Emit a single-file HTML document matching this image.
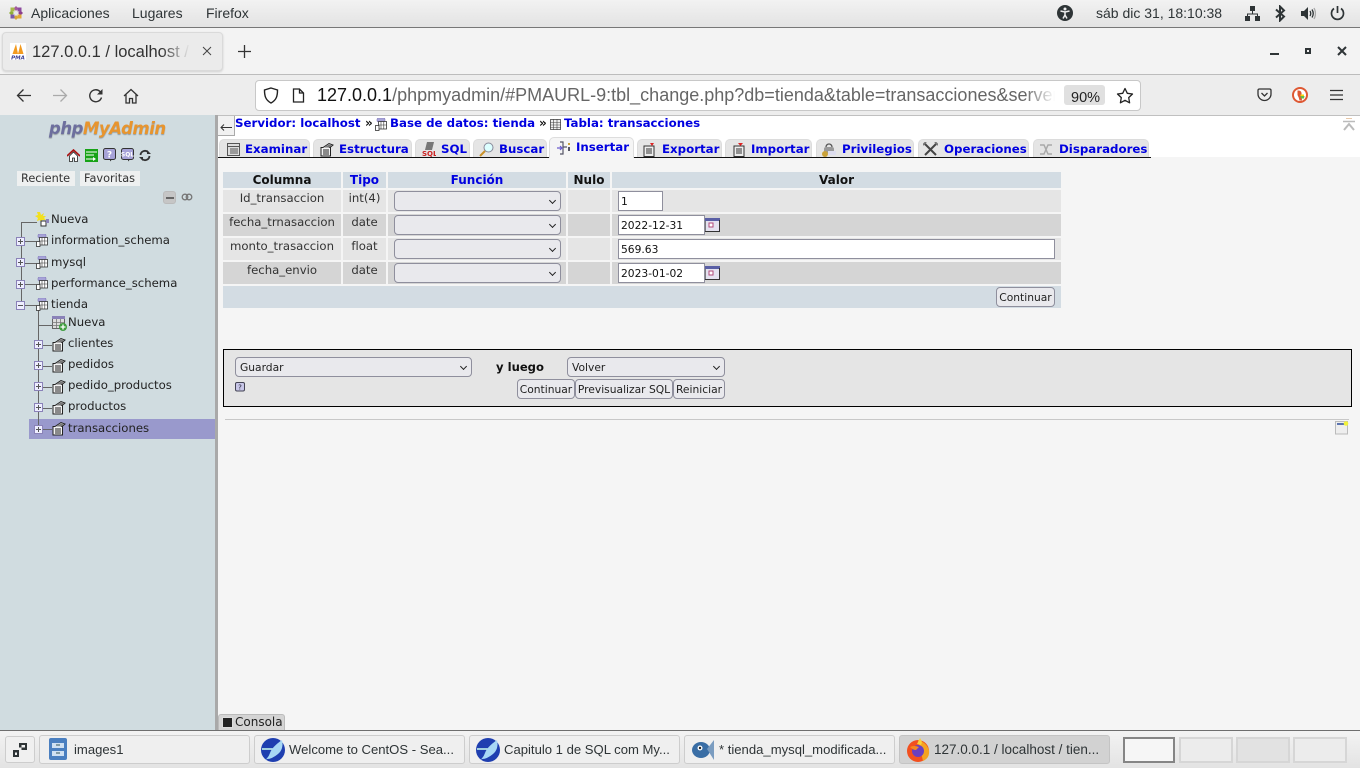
<!DOCTYPE html>
<html lang="es"><head><meta charset="utf-8"><title>phpMyAdmin</title>
<style>
html,body{margin:0;padding:0;width:1360px;height:768px;overflow:hidden;background:#f5f5f5}
body{position:relative;font-family:"DejaVu Sans",sans-serif;font-size:11.7px;color:#111}
.a,.t,svg{position:absolute}
.t{white-space:nowrap;line-height:16px}
.u{font-family:"Liberation Sans",sans-serif;font-size:14px;color:#2e3436}
.k{font-size:13.1px}
.b{font-weight:bold;color:#0000e0;font-size:11.8px}
.d{font-size:11.7px;color:#222}
.sel{position:absolute;box-sizing:border-box;background:#e9e9ed;border:1px solid #8f8f9d;border-radius:4px;height:20px;font-size:10.7px;line-height:20px;padding-left:4px;color:#222}
.sel:after{content:"";position:absolute;right:5px;top:6px;width:4px;height:4px;border-right:1.4px solid #222;border-bottom:1.4px solid #222;transform:rotate(45deg)}
.inp{position:absolute;box-sizing:border-box;background:#fff;border:1px solid #8f8f9d;height:20px;font-size:10.7px;line-height:20px;padding-left:2px;color:#111}
.btn{position:absolute;box-sizing:border-box;background:#e9e9ed;border:1px solid #8f8f9d;border-radius:4px;height:20px;font-size:10.7px;line-height:20px;text-align:center;color:#222}
.tab{position:absolute;box-sizing:border-box;top:139px;height:18px;background:#e5e5e5;border:1px solid #dcdcdc;border-bottom:0;border-radius:5px 5px 0 0}
.task{position:absolute;box-sizing:border-box;top:735px;height:29px;width:211px;background:#efefef;border:1px solid #cdcdcd;border-radius:3px}
.ws{position:absolute;box-sizing:border-box;top:737px;height:26px;background:#ececec;border:2px solid #d6d6d6}
.h{position:absolute;background:#666;height:1px}
.v{position:absolute;background:#666;width:1px}
.x{position:absolute;box-sizing:border-box;width:9px;height:9px;background:#eef;border:1px solid #8a82b8}
.x:before{content:"";position:absolute;left:1px;top:3px;width:5px;height:1px;background:#555}
.x.p:after{content:"";position:absolute;left:3px;top:1px;width:1px;height:5px;background:#555}
.hc{position:absolute;top:172px;height:16px;background:#d3dce3;text-align:center;font-weight:bold;font-size:12px;line-height:16px}
</style></head><body>

<!-- top GNOME bar -->
<div class="a" style="left:0;top:0;width:1360px;height:27px;background:linear-gradient(#f2f2f2,#e3e3e3)"></div>
<div class="a" style="left:0;top:27px;width:1360px;height:1px;background:#777"></div>
<svg style="left:9px;top:6px" width="14" height="14" viewBox="0 0 14 14"><path d="M7 0l2.500 2.500L7 5 4.500 2.500z" fill="#a35a9e"/><path d="M14 7l-2.500 2.500L9 7l2.500-2.500z" fill="#8c3f8c"/><path d="M7 14l-2.500-2.500L7 9l2.500 2.500z" fill="#d8a83a"/><path d="M0 7l2.500-2.500L5 7 2.500 9.500z" fill="#8fae3a"/><rect x="1.500" y="1.500" width="4" height="4" fill="#a8b84a"/><rect x="8.500" y="1.500" width="4" height="4" fill="#8c4a9e"/><rect x="1.500" y="8.500" width="4" height="4" fill="#7a5aa8"/><rect x="8.500" y="8.500" width="4" height="4" fill="#e0a838"/><path d="M7 4.500L9.500 7 7 9.500 4.500 7z" fill="#e8e8e8"/></svg>
<div class="t u" style="left:31px;top:5px">Aplicaciones</div>
<div class="t u" style="left:132px;top:5px">Lugares</div>
<div class="t u" style="left:206px;top:5px">Firefox</div>
<svg style="left:1057px;top:5px" width="16" height="16" viewBox="0 0 16 16"><circle cx="8" cy="8" r="8" fill="#2e3436"/><circle cx="8" cy="4" r="1.500" fill="#eee"/><path d="M3.500 6L8 7l4.500-1M8 7v3l-2 3.500M8 10l2 3.500" stroke="#eee" stroke-width="1.500" fill="none"/></svg>
<div class="t u" style="left:1096px;top:5px">sáb dic 31, 18:10:38</div>
<svg style="left:1245px;top:6px" width="15" height="15" viewBox="0 0 15 15"><path d="M5 0h5v5H5zM0 10h5v5H0zM10 10h5v5h-5z" fill="#2e3436"/><path d="M7.500 5v3M2.500 10V8h10v2" stroke="#2e3436" fill="none"/></svg>
<svg style="left:1275px;top:5px" width="11" height="17" viewBox="0 0 11 17"><path d="M1 4.500l8 7-4 4V1.500l4 4-8 7" stroke="#2e3436" stroke-width="2" fill="none"/></svg>
<svg style="left:1301px;top:6px" width="15" height="15" viewBox="0 0 15 15"><path d="M0 5h3l4-4v13l-4-4H0z" fill="#2e3436"/><path d="M9 5q1.500 2.500 0 5M11 3.500q2.500 4 0 8" stroke="#2e3436" stroke-width="1.300" fill="none"/><path d="M13 2q3 5.500 0 11" stroke="#aaa" stroke-width="1.300" fill="none"/></svg>
<svg style="left:1330px;top:5px" width="15" height="16" viewBox="0 0 15 16"><path d="M4 3.500a6 6 0 1 0 7 0M7.500 1v7" stroke="#2e3436" stroke-width="1.700" fill="none"/></svg>

<!-- tab bar -->
<div class="a" style="left:0;top:28px;width:1360px;height:46px;background:#f3f3f3"></div>
<div class="a" style="left:0;top:74px;width:1360px;height:1px;background:#bcbcbc"></div>
<div class="a" style="left:2px;top:32px;width:221px;height:39px;box-sizing:border-box;background:#ebebeb;border:1px solid #dadada;border-radius:4px;box-shadow:0 1px 2px rgba(0,0,0,.15)"></div>
<svg style="left:10px;top:43px" width="16" height="17" viewBox="0 0 16 17"><rect width="16" height="17" fill="#fff"/><path d="M2.500 11L6 1l2 10zM8 11l2.500-10 3 10z" fill="#f29a1f"/><text x="8" y="16.500" font-size="5.500" font-weight="bold" font-style="italic" text-anchor="middle" fill="#3a3f95" font-family="DejaVu Sans">PMA</text></svg>
<div class="t" style="left:32px;top:43px;font-family:'Liberation Sans',sans-serif;font-size:16.5px;line-height:18px;width:158px;overflow:hidden;color:#333;-webkit-mask-image:linear-gradient(90deg,#000 82%,transparent)">127.0.0.1 / localhost / tienda</div>
<svg style="left:202px;top:46px" width="10" height="10" viewBox="0 0 10 10"><path d="M1 1l8 8M9 1l-8 8" stroke="#444" stroke-width="1"/></svg>
<svg style="left:238px;top:45px" width="13" height="13" viewBox="0 0 13 13"><path d="M6.500 0v13M0 6.500h13" stroke="#333" stroke-width="1.300"/></svg>
<div class="a" style="left:1270px;top:53px;width:9px;height:2px;background:#2e3436"></div>
<div class="a" style="left:1305px;top:48px;width:6px;height:6px;box-sizing:border-box;border:2px solid #2e3436"></div>
<svg style="left:1337px;top:46px" width="10" height="10" viewBox="0 0 10 10"><path d="M1 1l8 8M9 1l-8 8" stroke="#2e3436" stroke-width="2"/></svg>

<!-- nav bar -->
<div class="a" style="left:0;top:75px;width:1360px;height:40px;background:#ededed"></div>
<svg style="left:16px;top:88px" width="16" height="15" viewBox="0 0 16 15"><path d="M15 7.500H1.500M7.500 1.500l-6 6 6 6" stroke="#333" stroke-width="1.300" fill="none"/></svg>
<svg style="left:52px;top:88px" width="16" height="15" viewBox="0 0 16 15"><path d="M1 7.500h13.500M8.500 1.500l6 6-6 6" stroke="#aaa" stroke-width="1.300" fill="none"/></svg>
<svg style="left:88px;top:88px" width="16" height="16" viewBox="0 0 16 16"><path d="M13.500 9.500a6 6 0 1 1-1.500-6L14 5.500" stroke="#333" stroke-width="1.400" fill="none"/><path d="M14.500 1v5.500H9z" fill="#333"/></svg>
<svg style="left:123px;top:88px" width="16" height="16" viewBox="0 0 16 16"><path d="M1 8l7-6.500L15 8M3 6.500V15h3.500v-4.500h3V15H13V6.500" stroke="#333" stroke-width="1.300" fill="none"/></svg>
<div class="a" style="left:255px;top:80px;width:886px;height:31px;box-sizing:border-box;background:#fff;border:1px solid #c8c8c8;border-radius:4px"></div>
<svg style="left:263px;top:87px" width="16" height="17" viewBox="0 0 16 17"><path d="M8 1l6.500 2c0 6-1 10-6.500 13C2.500 13 1.500 9 1.500 3z" stroke="#222" stroke-width="1.400" fill="none"/></svg>
<svg style="left:292px;top:88px" width="13" height="15" viewBox="0 0 13 15"><path d="M1.500 1h6l4 4v9h-10zM7.500 1v4h4" stroke="#222" stroke-width="1.300" fill="none"/></svg>
<div class="t" style="left:317px;top:85px;font-family:'Liberation Sans',sans-serif;font-size:18px;line-height:20px;width:738px;overflow:hidden;color:#666;-webkit-mask-image:linear-gradient(90deg,#000 96%,transparent)"><span style="color:#111">127.0.0.1</span>/phpmyadmin/#PMAURL-9:tbl_change.php?db=tienda&amp;table=transacciones&amp;server=1</div>
<div class="a" style="left:1064px;top:85px;width:41px;height:20px;background:#e0e0e0;border-radius:3px"></div>
<div class="t" style="left:1071px;top:90px;font-family:'Liberation Sans',sans-serif;font-size:14.5px;color:#222">90%</div>
<svg style="left:1116px;top:87px" width="18" height="17" viewBox="0 0 18 17"><path d="M9 1.500l2.300 4.800 5.200.7-3.800 3.600.9 5.200L9 13.300l-4.600 2.500.9-5.200L1.500 7l5.200-.7z" stroke="#222" stroke-width="1.300" fill="none" stroke-linejoin="round"/></svg>
<svg style="left:1257px;top:88px" width="15" height="14" viewBox="0 0 15 14"><path d="M1 2.500q0-1.500 1.500-1.500h10q1.500 0 1.500 1.500V6a6.500 6.500 0 0 1-13 0z" stroke="#333" stroke-width="1.300" fill="none"/><path d="M4.500 5L7.500 8l3-3" stroke="#333" stroke-width="1.300" fill="none"/></svg>
<svg style="left:1292px;top:87px" width="16" height="16" viewBox="0 0 16 16"><circle cx="8" cy="8" r="8" fill="#de5833"/><circle cx="8" cy="8" r="6" fill="#fff"/><path d="M5.500 3.500q4.500-.5 4 4l.5 6H7.500q-.5-3-2-5.500z" fill="#de5833"/><path d="M8.500 9h4l-.5 2.500H9z" fill="#65bc46"/><path d="M8.500 7.500h3.500v1.500H8.500z" fill="#fdd20a"/></svg>
<svg style="left:1330px;top:89px" width="13" height="12" viewBox="0 0 13 12"><path d="M0 1.500h13M0 6h13M0 10.500h13" stroke="#333" stroke-width="1.200"/></svg>

<!-- sidebar -->
<div class="a" style="left:0;top:115px;width:215px;height:615px;background:#d0dce0"></div>
<div class="a" style="left:215px;top:115px;width:3px;height:615px;background:#a9a9a9"></div>
<div class="t" style="left:49px;top:119px;font-size:16.5px;line-height:20px;font-weight:bold;font-style:italic;letter-spacing:-.45px;text-shadow:0 1px 1px rgba(0,0,0,.3)"><span style="color:#6d6f9e">php</span><span style="color:#e8952e">MyAdmin</span></div>
<svg style="left:67px;top:149px" width="13" height="13" viewBox="0 0 13 13"><path d="M2.500 7v5.500h3V9h2v3.500h3V7L6.500 3z" fill="#fff" stroke="#222" stroke-width=".8"/><path d="M0 7L6.500 1 13 7" stroke="#a11" stroke-width="1.600" fill="none"/></svg>
<svg style="left:85px;top:149px" width="13" height="13" viewBox="0 0 13 13"><rect width="13" height="13" fill="#17a317"/><path d="M1 3h11M1 6h8M1 10h9" stroke="#fff" stroke-width="1" fill="none"/><path d="M8 8l3 2-3 2z" fill="#fff"/></svg>
<svg style="left:103px;top:148px" width="13" height="14" viewBox="0 0 13 14"><rect x=".5" y=".5" width="12" height="11" rx="2" fill="#a7a3d8" stroke="#333"/><text x="6.500" y="9.500" font-size="9" font-weight="bold" text-anchor="middle" fill="#fff" font-family="DejaVu Sans">?</text><path d="M7 11.500v2l2-2z" fill="#333"/></svg>
<svg style="left:121px;top:148px" width="13" height="14" viewBox="0 0 13 14"><rect x=".5" y=".5" width="12" height="11" rx="2" fill="#a7a3d8" stroke="#333"/><text x="6.500" y="8.500" font-size="6" font-weight="bold" text-anchor="middle" fill="#fff" font-family="DejaVu Sans">SQL</text><path d="M7 11.500v2l2-2z" fill="#333"/></svg>
<svg style="left:139px;top:149px" width="12" height="13" viewBox="0 0 12 13"><path d="M1.500 6a4.500 4.500 0 0 1 7.500-3M10.500 7a4.500 4.500 0 0 1-7.500 3" stroke="#333" stroke-width="1.800" fill="none"/><path d="M8 1v4h4zM4 12V8H0z" fill="#333"/></svg>
<div class="a" style="left:17px;top:171px;width:58px;height:15px;background:#eef0f0"></div>
<div class="t" style="left:21px;top:171px;font-size:11.3px;line-height:15px;color:#333">Reciente</div>
<div class="a" style="left:80px;top:171px;width:60px;height:15px;background:#eef0f0"></div>
<div class="t" style="left:84px;top:171px;font-size:11.3px;line-height:15px;color:#333">Favoritas</div>
<div class="a" style="left:163px;top:191px;width:13px;height:13px;background:#c6c6c6;border:1px solid #bbb;border-radius:3px;box-sizing:border-box"></div>
<div class="a" style="left:166px;top:197px;width:8px;height:2px;background:#666"></div>
<svg style="left:181px;top:193px" width="12" height="8" viewBox="0 0 12 8"><circle cx="4" cy="4" r="2.800" stroke="#777" stroke-width="1.300" fill="none"/><circle cx="8" cy="4" r="2.800" stroke="#777" stroke-width="1.300" fill="none"/></svg>

<!-- tree -->
<div class="a" style="left:29px;top:419px;width:186px;height:20px;background:#9999cc"></div>
<div class="v" style="left:21px;top:222px;height:83px"></div>
<div class="h" style="left:21px;top:222px;width:16px"></div>
<div class="h" style="left:24px;top:241px;width:12px"></div>
<div class="h" style="left:24px;top:263px;width:12px"></div>
<div class="h" style="left:24px;top:284px;width:12px"></div>
<div class="h" style="left:24px;top:305px;width:12px"></div>
<div class="v" style="left:38px;top:310px;height:119px"></div>
<div class="h" style="left:38px;top:325px;width:14px"></div>
<div class="h" style="left:42px;top:345px;width:10px"></div>
<div class="h" style="left:42px;top:366px;width:10px"></div>
<div class="h" style="left:42px;top:387px;width:10px"></div>
<div class="h" style="left:42px;top:408px;width:10px"></div>
<div class="h" style="left:42px;top:429px;width:10px"></div>
<div class="x p" style="left:16px;top:237px"></div>
<div class="x p" style="left:16px;top:258px"></div>
<div class="x p" style="left:16px;top:280px"></div>
<div class="x" style="left:16px;top:301px"></div>
<div class="x p" style="left:34px;top:340px"></div>
<div class="x p" style="left:34px;top:361px"></div>
<div class="x p" style="left:34px;top:382px"></div>
<div class="x p" style="left:34px;top:403px"></div>
<div class="x p" style="left:34px;top:425px"></div>

<svg width="0" height="0" style="left:0;top:0"><defs>
<g id="db"><rect x="2" y="0" width="8" height="4" rx="1.500" fill="#a7a3d8" stroke="#8078b8" stroke-width=".6"/><rect x="3.500" y="3.500" width="8" height="7.500" fill="#fff" stroke="#333" stroke-width=".8"/><path d="M3.500 7h8M6 3.500V11M8.800 3.500V11" stroke="#333" stroke-width=".6"/><rect x=".5" y="7.500" width="3.500" height="5" fill="#fff" stroke="#333" stroke-width=".8"/></g>
<g id="tb"><path d="M1 5.500h2L9 1.500l4 1.500-3 2.500h.5V14H1z" fill="#f2f2f2" stroke="#222" stroke-width="1"/><path d="M3 8h6M3 10h6M3 12h6" stroke="#222" stroke-width="1"/><path d="M4 5.500L9 2.500l3 1-3 2z" fill="#777"/></g>
<g id="cal"><rect x=".5" y=".5" width="14" height="13" fill="#e4e2f0" stroke="#555" stroke-width=".7"/><rect x="0" y="0" width="15" height="3" fill="#5a5fa5"/><rect x="4" y="5" width="4" height="4" fill="#fff" stroke="#b04a7a"/><path d="M0 13.500h15M14.500 2v12" stroke="#333"/></g>
</defs></svg>

<svg style="left:34px;top:212px" width="15" height="15" viewBox="0 0 15 15"><path d="M6 0l1 3 3-2-1 3 3 0-2 2 2 2-4 0-1 3-1-3-3 1 1-3-3-2 3-1-1-3z" fill="#f2e01f"/><rect x="7" y="9" width="5" height="5" fill="#fff" stroke="#333"/><rect x="12" y="7" width="3" height="4" fill="#8a82b8"/></svg>
<div class="t d" style="left:51px;top:211px">Nueva</div>
<svg style="left:36px;top:234px" width="12" height="13" viewBox="0 0 12 13"><use href="#db"/></svg>
<div class="t d" style="left:51px;top:232px">information_schema</div>
<svg style="left:36px;top:256px" width="12" height="13" viewBox="0 0 12 13"><use href="#db"/></svg>
<div class="t d" style="left:51px;top:254px">mysql</div>
<svg style="left:36px;top:277px" width="12" height="13" viewBox="0 0 12 13"><use href="#db"/></svg>
<div class="t d" style="left:51px;top:275px">performance_schema</div>
<svg style="left:36px;top:298px" width="12" height="13" viewBox="0 0 12 13"><use href="#db"/></svg>
<div class="t d" style="left:51px;top:296px">tienda</div>
<svg style="left:52px;top:316px" width="15" height="15" viewBox="0 0 15 15"><rect x=".5" y=".5" width="12" height="12" fill="#ddd" stroke="#666"/><rect x="0" y="0" width="13" height="3" fill="#8a82b8"/><path d="M4.500 3v9M8.500 3v9M0 6.500h12M0 9.500h12" stroke="#777" stroke-width=".8"/><circle cx="11" cy="11" r="4" fill="#3f9d3f"/><path d="M11 8.500v5M8.500 11h5" stroke="#fff" stroke-width="1.300"/></svg>
<div class="t d" style="left:68px;top:314px">Nueva</div>
<svg style="left:52px;top:337px" width="14" height="15" viewBox="0 0 14 15"><use href="#tb"/></svg>
<div class="t d" style="left:68px;top:335px">clientes</div>
<svg style="left:52px;top:358px" width="14" height="15" viewBox="0 0 14 15"><use href="#tb"/></svg>
<div class="t d" style="left:68px;top:356px">pedidos</div>
<svg style="left:52px;top:379px" width="14" height="15" viewBox="0 0 14 15"><use href="#tb"/></svg>
<div class="t d" style="left:68px;top:377px">pedido_productos</div>
<svg style="left:52px;top:400px" width="14" height="15" viewBox="0 0 14 15"><use href="#tb"/></svg>
<div class="t d" style="left:68px;top:398px">productos</div>
<svg style="left:52px;top:421px" width="14" height="15" viewBox="0 0 14 15"><use href="#tb"/></svg>
<div class="t d" style="left:68px;top:420px">transacciones</div>

<!-- content -->
<div class="a" style="left:218px;top:115px;width:1142px;height:1px;background:#c0c0c0"></div>
<div class="a" style="left:218px;top:116px;width:1142px;height:41px;background:#fff"></div>
<div class="a" style="left:218px;top:116px;width:17px;height:20px;box-sizing:border-box;background:#f1f1f1;border:1px solid #aaa;border-left:0;border-top:0"></div>
<svg style="left:220px;top:124px" width="12" height="7" viewBox="0 0 12 7"><path d="M12 3.500H1M4 .5l-3 3 3 3" stroke="#333" fill="none"/></svg>
<svg style="left:1343px;top:118px" width="12" height="13" viewBox="0 0 12 13"><path d="M3 .5h6" stroke="#e8c8a8"/><path d="M0 3.500h12" stroke="#bbb" stroke-width="1.500"/><path d="M1 12l5-6 5 6" stroke="#bbb" stroke-width="2" fill="none"/></svg>
<div class="t b" style="left:235px;top:115px">Servidor: localhost</div>
<div class="t" style="left:365px;top:115px;font-weight:bold;font-size:12px">»</div>
<svg style="left:375px;top:118px" width="12" height="13" viewBox="0 0 12 13"><use href="#db"/></svg>
<div class="t b" style="left:390px;top:115px">Base de datos: tienda</div>
<div class="t" style="left:539px;top:115px;font-weight:bold;font-size:12px">»</div>
<svg style="left:550px;top:119px" width="11" height="11" viewBox="0 0 11 11"><rect x=".5" y=".5" width="10" height="10" fill="#eee" stroke="#444" stroke-width=".8"/><path d="M0 3.500h11M0 6h11M0 8.500h11M3.500 0v11M7 0v11" stroke="#444" stroke-width=".6"/></svg>
<div class="t b" style="left:564px;top:115px">Tabla: transacciones</div>

<div class="tab" style="left:219px;width:91px"></div>
<div class="tab" style="left:313px;width:99px"></div>
<div class="tab" style="left:415px;width:55px"></div>
<div class="tab" style="left:473px;width:74px"></div>
<div class="tab" style="left:637px;width:85px"></div>
<div class="tab" style="left:725px;width:87px"></div>
<div class="tab" style="left:816px;width:98px"></div>
<div class="tab" style="left:918px;width:111px"></div>
<div class="tab" style="left:1033px;width:116px"></div>
<div class="a" style="left:218px;top:157px;width:933px;height:1px;background:#111"></div>
<div class="a" style="left:549px;top:137px;width:85px;height:21px;box-sizing:border-box;background:#f5f5f5;border:1px solid #ddd;border-bottom:0;border-radius:5px 5px 0 0"></div>

<svg style="left:227px;top:143px" width="13" height="13" viewBox="0 0 13 13"><rect x=".5" y=".5" width="12" height="12" fill="#ddd" stroke="#555"/><path d="M0 3.500h13M3 6h8M3 8h8M3 10h8" stroke="#555"/></svg>
<div class="t b" style="left:245px;top:141px">Examinar</div>
<svg style="left:320px;top:142px" width="14" height="15" viewBox="0 0 14 15"><use href="#tb"/></svg>
<div class="t b" style="left:339px;top:141px">Estructura</div>
<svg style="left:422px;top:142px" width="14" height="15" viewBox="0 0 14 15"><path d="M5 0h7l-2 8H3z" fill="#777"/><text x="0" y="14" font-size="7" font-weight="bold" fill="#c22" font-family="DejaVu Sans">SQL</text></svg>
<div class="t b" style="left:441px;top:141px">SQL</div>
<svg style="left:479px;top:142px" width="15" height="15" viewBox="0 0 15 15"><circle cx="9.500" cy="5.500" r="4.500" fill="#dff" stroke="#889" stroke-width="1"/><path d="M6 9l-5 5" stroke="#c9922a" stroke-width="2"/></svg>
<div class="t b" style="left:499px;top:141px">Buscar</div>
<svg style="left:557px;top:141px" width="14" height="14" viewBox="0 0 14 14"><path d="M3 1h3v12H3M6 6h4" stroke="#556" stroke-width="1.200" fill="none"/><path d="M0 7h5l-2-2M3 9l2-2" stroke="#6a5acd" stroke-width="1.200" fill="none"/><rect x="11" y="2" width="2" height="2" fill="#c9a23a"/><rect x="11" y="6" width="2" height="4" fill="#556"/></svg>
<div class="t b" style="left:576px;top:139px">Insertar</div>
<svg style="left:643px;top:143px" width="13" height="14" viewBox="0 0 13 14"><rect x="1" y="3" width="10" height="10.500" fill="#eee" stroke="#333"/><path d="M3 6h6M3 8h6M3 10h6" stroke="#333"/><path d="M7 0l4 0-2 3z" fill="#d22"/></svg>
<div class="t b" style="left:662px;top:141px">Exportar</div>
<svg style="left:733px;top:143px" width="13" height="14" viewBox="0 0 13 14"><rect x="1" y="3" width="10" height="10.500" fill="#eee" stroke="#333"/><path d="M3 6h6M3 8h6M3 10h6" stroke="#333"/><path d="M5 0h5L7.500 3z" fill="#d22"/></svg>
<div class="t b" style="left:751px;top:141px">Importar</div>
<svg style="left:822px;top:143px" width="14" height="14" viewBox="0 0 14 14"><path d="M4 4a3 3 0 0 1 6 0" stroke="#555" stroke-width="1.300" fill="none"/><rect x="2" y="4" width="10" height="6" rx="2" fill="#999"/><circle cx="3" cy="11" r="3" fill="#c9a23a"/><rect x="6" y="8" width="8" height="4" fill="#dde"/></svg>
<div class="t b" style="left:842px;top:141px">Privilegios</div>
<svg style="left:923px;top:142px" width="15" height="15" viewBox="0 0 15 15"><path d="M2 2l11 11M13 2L2 13" stroke="#444" stroke-width="2"/><path d="M0 3l3-3M12 0l3 3" stroke="#777" stroke-width="2"/></svg>
<div class="t b" style="left:944px;top:141px">Operaciones</div>
<svg style="left:1039px;top:144px" width="14" height="11" viewBox="0 0 14 11"><path d="M1 1h4l4 9h4M1 10h4l4-9h4" stroke="#aaa" stroke-width="1.500" fill="none"/></svg>
<div class="t b" style="left:1059px;top:141px">Disparadores</div>

<!-- table -->
<div class="hc" style="left:223px;width:118px">Columna</div>
<div class="hc" style="left:343px;width:43px;color:#0000e0">Tipo</div>
<div class="hc" style="left:388px;width:178px;color:#0000e0">Función</div>
<div class="hc" style="left:568px;width:42px">Nulo</div>
<div class="hc" style="left:612px;width:449px">Valor</div>

<div class="a" style="left:223px;top:190px;width:118px;height:22px;background:#e5e5e5"></div><div class="a" style="left:343px;top:190px;width:43px;height:22px;background:#e5e5e5"></div><div class="a" style="left:388px;top:190px;width:178px;height:22px;background:#e5e5e5"></div><div class="a" style="left:568px;top:190px;width:42px;height:22px;background:#e5e5e5"></div><div class="a" style="left:612px;top:190px;width:449px;height:22px;background:#e5e5e5"></div>
<div class="a" style="left:223px;top:214px;width:118px;height:22px;background:#d5d5d5"></div><div class="a" style="left:343px;top:214px;width:43px;height:22px;background:#d5d5d5"></div><div class="a" style="left:388px;top:214px;width:178px;height:22px;background:#d5d5d5"></div><div class="a" style="left:568px;top:214px;width:42px;height:22px;background:#d5d5d5"></div><div class="a" style="left:612px;top:214px;width:449px;height:22px;background:#d5d5d5"></div>
<div class="a" style="left:223px;top:238px;width:118px;height:22px;background:#e5e5e5"></div><div class="a" style="left:343px;top:238px;width:43px;height:22px;background:#e5e5e5"></div><div class="a" style="left:388px;top:238px;width:178px;height:22px;background:#e5e5e5"></div><div class="a" style="left:568px;top:238px;width:42px;height:22px;background:#e5e5e5"></div><div class="a" style="left:612px;top:238px;width:449px;height:22px;background:#e5e5e5"></div>
<div class="a" style="left:223px;top:262px;width:118px;height:22px;background:#d5d5d5"></div><div class="a" style="left:343px;top:262px;width:43px;height:22px;background:#d5d5d5"></div><div class="a" style="left:388px;top:262px;width:178px;height:22px;background:#d5d5d5"></div><div class="a" style="left:568px;top:262px;width:42px;height:22px;background:#d5d5d5"></div><div class="a" style="left:612px;top:262px;width:449px;height:22px;background:#d5d5d5"></div>
<div class="a" style="left:223px;top:286px;width:838px;height:22px;background:#d3dce3"></div>

<div class="t" style="left:223px;width:118px;top:190px;text-align:center;color:#333">Id_transaccion</div>
<div class="t" style="left:343px;width:43px;top:190px;text-align:center;color:#333">int(4)</div>
<div class="t" style="left:223px;width:118px;top:214px;text-align:center;color:#333">fecha_trnasaccion</div>
<div class="t" style="left:343px;width:43px;top:214px;text-align:center;color:#333">date</div>
<div class="t" style="left:223px;width:118px;top:238px;text-align:center;color:#333">monto_trasaccion</div>
<div class="t" style="left:343px;width:43px;top:238px;text-align:center;color:#333">float</div>
<div class="t" style="left:223px;width:118px;top:262px;text-align:center;color:#333">fecha_envio</div>
<div class="t" style="left:343px;width:43px;top:262px;text-align:center;color:#333">date</div>

<div class="sel" style="left:394px;top:191px;width:167px"></div>
<div class="sel" style="left:394px;top:215px;width:167px"></div>
<div class="sel" style="left:394px;top:239px;width:167px"></div>
<div class="sel" style="left:394px;top:263px;width:167px"></div>
<div class="inp" style="left:618px;top:191px;width:45px">1</div>
<div class="inp" style="left:618px;top:215px;width:87px">2022-12-31</div>
<div class="inp" style="left:618px;top:239px;width:437px">569.63</div>
<div class="inp" style="left:618px;top:263px;width:87px">2023-01-02</div>
<svg style="left:705px;top:218px" width="15" height="14" viewBox="0 0 15 14"><use href="#cal"/></svg>
<svg style="left:705px;top:266px" width="15" height="14" viewBox="0 0 15 14"><use href="#cal"/></svg>
<div class="btn" style="left:996px;top:287px;width:59px">Continuar</div>

<!-- action box -->
<div class="a" style="left:223px;top:349px;width:1129px;height:58px;box-sizing:border-box;background:#e5e5e5;border:1px solid #000"></div>
<div class="sel" style="left:235px;top:357px;width:237px">Guardar</div>
<div class="t" style="left:496px;top:359px;font-weight:bold;font-size:11.6px">y luego</div>
<div class="sel" style="left:567px;top:357px;width:158px">Volver</div>
<svg style="left:235px;top:382px" width="10" height="10" viewBox="0 0 10 10"><rect x=".5" y=".5" width="9" height="8.500" rx="1.500" fill="#c8c6e8" stroke="#445"/><text x="5" y="7.500" font-size="7" text-anchor="middle" fill="#223" font-family="DejaVu Sans">?</text></svg>
<div class="btn" style="left:517px;top:379px;width:58px">Continuar</div>
<div class="btn" style="left:575px;top:379px;width:98px">Previsualizar SQL</div>
<div class="btn" style="left:673px;top:379px;width:52px">Reiniciar</div>

<div class="a" style="left:225px;top:419px;width:1124px;height:1px;background:#c8c8c8"></div>
<svg style="left:1335px;top:421px" width="14" height="14" viewBox="0 0 14 14"><rect x=".5" y=".5" width="12" height="12.500" fill="#eee" stroke="#bbb"/><path d="M2 3h8" stroke="#2a4a9a" stroke-width="1.500"/><circle cx="11" cy="2.500" r="2.300" fill="#f2f23a"/></svg>

<!-- console -->
<div class="a" style="left:218px;top:714px;width:67px;height:16px;box-sizing:border-box;background:#d4d4d4;border:1px solid #bbb;border-bottom:0;border-radius:3px 3px 0 0"></div>
<div class="a" style="left:222px;top:717px;width:11px;height:11px;box-sizing:border-box;background:#222;border:1px solid #ddd"></div>
<div class="t" style="left:235px;top:714px;color:#222;font-size:12px">Consola</div>

<!-- taskbar -->
<div class="a" style="left:0;top:730px;width:1360px;height:1px;background:#6e6e6e"></div>
<div class="a" style="left:0;top:731px;width:1360px;height:37px;background:linear-gradient(#f3f3f3,#e3e3e3)"></div>
<div class="a" style="left:5px;top:736px;width:30px;height:27px;box-sizing:border-box;background:#f0f0f0;border:1px solid #cdcdcd;border-radius:3px"></div>
<svg style="left:13px;top:743px" width="14" height="14" viewBox="0 0 14 14"><path d="M6 0h8v7H8.500V4.500H6z" fill="#2e3436"/><rect x="8.500" y="2" width="3.500" height="2.500" fill="#f0f0f0"/><path d="M0 7h6v7H0z" fill="#2e3436"/><rect x="2" y="9.500" width="2" height="2.500" fill="#f0f0f0"/></svg>

<div class="task" style="left:39px"></div>
<svg style="left:49px;top:738px" width="18" height="22" viewBox="0 0 18 22"><rect x="0" y="0" width="18" height="22" rx="2" fill="#4a7fc0"/><rect x="3" y="5" width="12" height="5" fill="#cfe0f2"/><rect x="3" y="13" width="12" height="5" fill="#cfe0f2"/><path d="M7 7h4M7 15h4" stroke="#355"/></svg>
<div class="t u k" style="left:74px;top:742px">images1</div>

<div class="task" style="left:254px"></div>
<svg style="left:261px;top:738px" width="24" height="24" viewBox="0 0 24 24"><circle cx="12" cy="12" r="12" fill="#1f3fb0"/><path d="M1 11h15" stroke="#cfe" stroke-width="1.500"/><path d="M1 24q6-3 8-9T21 2q2 9-4 14t-11 5z" fill="#a8d8f5"/></svg>
<div class="t u k" style="left:289px;top:742px">Welcome to CentOS - Sea...</div>

<div class="task" style="left:469px"></div>
<svg style="left:476px;top:738px" width="24" height="24" viewBox="0 0 24 24"><circle cx="12" cy="12" r="12" fill="#1f3fb0"/><path d="M1 11h15" stroke="#cfe" stroke-width="1.500"/><path d="M1 24q6-3 8-9T21 2q2 9-4 14t-11 5z" fill="#a8d8f5"/></svg>
<div class="t u k" style="left:504px;top:742px">Capitulo 1 de SQL com My...</div>

<div class="task" style="left:684px"></div>
<svg style="left:692px;top:739px" width="22" height="22" viewBox="0 0 22 22"><ellipse cx="9" cy="11" rx="9" ry="8" fill="#3a6ea5"/><path d="M15 10L22 1v20z" fill="#7a9cc0"/><circle cx="8" cy="9" r="2.500" fill="#fff"/><circle cx="8" cy="9" r="1.200" fill="#222"/></svg>
<div class="t u k" style="left:719px;top:742px">* tienda_mysql_modificada...</div>

<div class="task" style="left:899px;background:#d2d2d2;border-color:#c4c4c4"></div>
<svg style="left:906px;top:738px" width="24" height="24" viewBox="0 0 24 24"><circle cx="12" cy="13" r="11" fill="#f2501f"/><path d="M12 2q8 2 11 10 1 8-6 11z" fill="#f5a31f"/><path d="M14 0q3 4 1 7l-4-1z" fill="#fbd03a"/><circle cx="12" cy="13" r="6" fill="#6a3fc0"/><path d="M4 9q4-2 9 0l-3 3q-3 0-6-3z" fill="#f58a1f"/></svg>
<div class="t u" style="left:934px;top:742px;font-size:13.5px">127.0.0.1 / localhost / tien...</div>

<div class="ws" style="left:1123px;width:52px;background:#f6f6f6;border-color:#858585;border-width:2px"></div>
<div class="ws" style="left:1179px;width:54px"></div>
<div class="ws" style="left:1236px;width:54px;background:#e2e2e2"></div>
<div class="ws" style="left:1293px;width:54px"></div>
</body></html>
